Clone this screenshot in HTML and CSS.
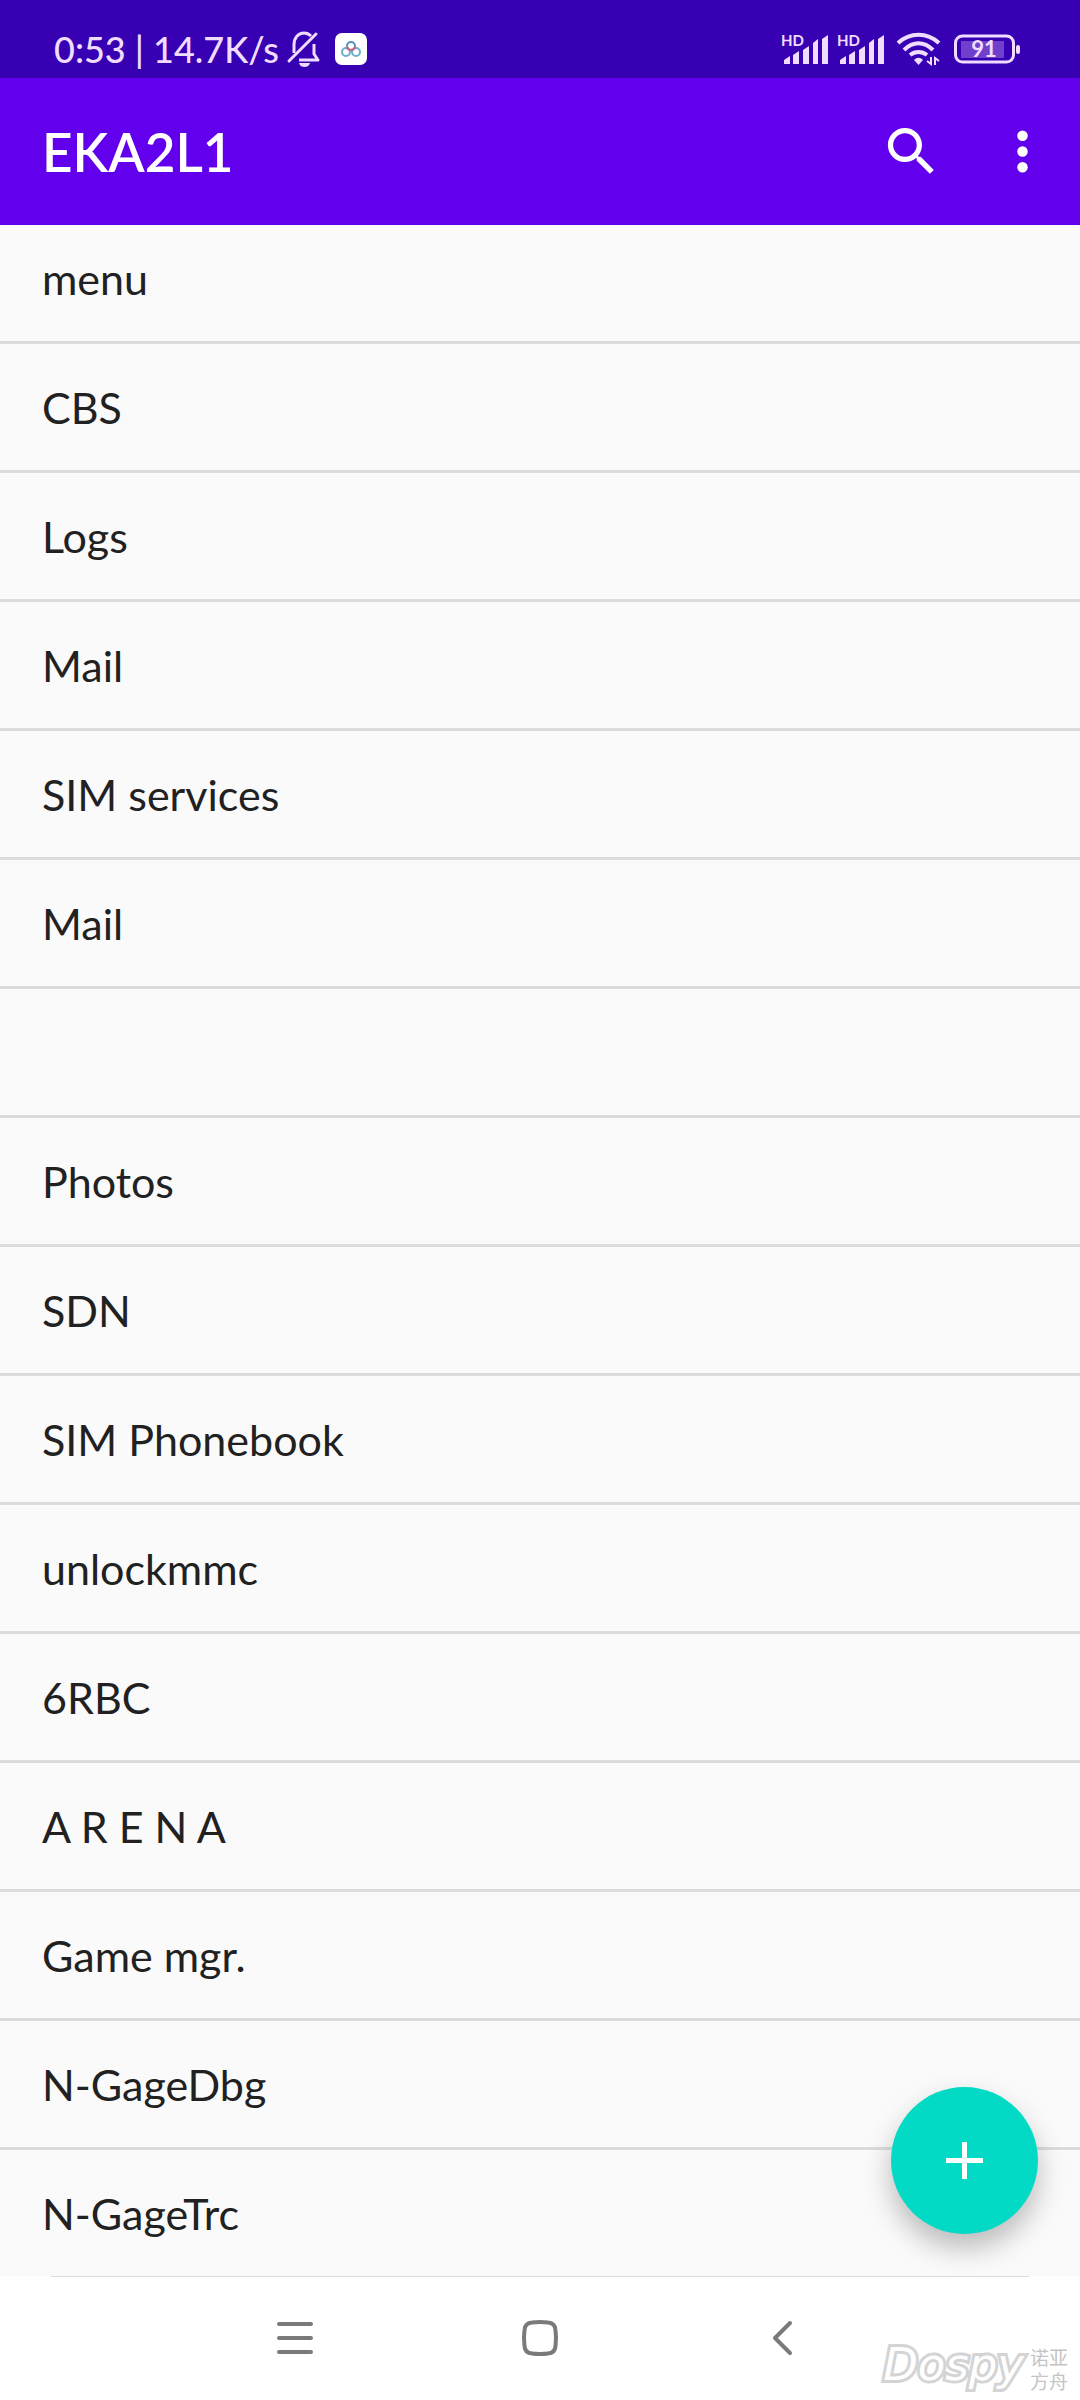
FILE: index.html
```html
<!DOCTYPE html>
<html lang="en">
<head>
    <meta charset="UTF-8">
    <meta name="viewport" content="width=device-width, initial-scale=1.0">
    <title>EKA2L1</title>
    <link rel="stylesheet" href="styles.css">
</head>
<body>
    <div class="status-bar">
        <div class="status-left">
            <span>0:53 | 14.7K/s</span>
            <svg class="bell" width="34" height="38" viewBox="0 0 34 38" fill="none" stroke="#f0dcff" stroke-width="3">
                <path d="M7 23V15C7 8 11 3 17 3c3 0 5 1 7 3M27 14v10l4 6H12" stroke-linejoin="round"/>
                <path d="M2 31L29 4" stroke-linecap="round"/>
                <path d="M12 33h11c-1 3-3 4-5.500 4s-4.500-1-5.500-4z" fill="#f0dcff" stroke="none"/>
            </svg>
            <svg width="32" height="32" viewBox="0 0 32 32" fill="none" stroke-width="2">
                <rect width="32" height="32" rx="7" fill="#fff"/>
                <circle cx="11" cy="19" r="4" stroke="#6ab0cc"/>
                <circle cx="21" cy="19" r="4" stroke="#6ab0cc"/>
                <circle cx="16" cy="13" r="4" stroke="#5590b8"/>
                <path d="M12 14c1 4 7 4 8 0" stroke="#d0667c"/>
            </svg>
        </div>
        <div class="status-right">
            <svg width="48" height="32" viewBox="0 0 48 32" fill="#f0dcff">
                <text class="hd" x="0" y="13">HD</text>
                <path d="M3 27l6-4v8H3zM12 22l6-4v13h-6zM22 17l6-4v18h-6zM32 10l5-4v25h-5zM41 6l6-4v29h-6z"/>
            </svg>
            <svg width="48" height="32" viewBox="0 0 48 32" fill="#f0dcff">
                <text class="hd" x="0" y="13">HD</text>
                <path d="M3 27l6-4v8H3zM12 22l6-4v13h-6zM22 17l6-4v18h-6zM32 10l5-4v25h-5zM41 6l6-4v29h-6z"/>
            </svg>
            <svg class="wifi" width="44" height="34" viewBox="0 0 44 34" fill="none" stroke="#f0dcff" stroke-width="4">
                <path d="M1 11C13 0 30 0 42 11M7 18C16 9 27 9 36 18M13 23c5-4 12-4 17 0"/>
                <path d="M17 28c3-3 6-3 9 0l-4.500 5z" fill="#f0dcff" stroke="none"/>
                <path d="M34 25v7l-4-3M38 33v-7l4 3" stroke-width="2"/>
            </svg>
            <svg class="battery" width="66" height="30" viewBox="0 0 66 30">
                <rect x="1.500" y="2" width="58" height="26" rx="7" fill="none" stroke="#f0dcff" stroke-width="3"/>
                <rect x="7" y="7" width="43" height="17" fill="#7040cc"/>
                <rect x="62" y="11" width="4" height="9" rx="2" fill="#f0dcff"/>
                <text class="level" x="30" y="23" text-anchor="middle" fill="#f0dcff">91</text>
            </svg>
        </div>
    </div>

    <header class="app-bar">
        <h1>EKA2L1</h1>
        <button aria-label="Search">
            <svg width="63" height="63" viewBox="0 0 24 24" fill="#fff">
                <path d="M15.500 14h-.790l-.280-.270C15.410 12.590 16 11.110 16 9.500 16 5.910 13.090 3 9.500 3S3 5.910 3 9.500 5.910 16 9.500 16c1.610 0 3.090-.590 4.230-1.570l.270.280v.790l5 4.990L20.490 19l-4.990-5zm-6 0C7.010 14 5 11.990 5 9.500S7.010 5 9.500 5 14 7.010 14 9.500 11.990 14 9.500 14z"/>
            </svg>
        </button>
        <button aria-label="More options">
            <svg width="63" height="63" viewBox="0 0 24 24" fill="#fff">
                <circle cx="12" cy="6" r="2"/>
                <circle cx="12" cy="12" r="2"/>
                <circle cx="12" cy="18" r="2"/>
            </svg>
        </button>
    </header>

    <main>
        <ul class="app-list">
            <li>menu</li>
            <li>CBS</li>
            <li>Logs</li>
            <li>Mail</li>
            <li>SIM services</li>
            <li>Mail</li>
            <li></li>
            <li>Photos</li>
            <li>SDN</li>
            <li>SIM Phonebook</li>
            <li>unlockmmc</li>
            <li>6RBC</li>
            <li>A R E N A</li>
            <li>Game mgr.</li>
            <li>N-GageDbg</li>
            <li>N-GageTrc</li>
        </ul>
        <button class="fab" aria-label="Add">
            <svg width="37" height="37" viewBox="0 0 37 37" stroke="#fff" stroke-width="5">
                <path d="M18.500 0v37M0 18.500h37"/>
            </svg>
        </button>
    </main>

    <nav class="nav-bar">
        <button aria-label="Recent apps">
            <svg width="44" height="44" viewBox="0 0 44 44" stroke="#7a7a7a" stroke-width="4" stroke-linecap="round">
                <path d="M6 8h32M6 22h32M6 36h32"/>
            </svg>
        </button>
        <button aria-label="Home">
            <svg width="44" height="44" viewBox="0 0 44 44" fill="none" stroke="#7a7a7a" stroke-width="4">
                <path d="M14 6.500Q22 5.500 30 6.500Q37 7 37.500 14Q38.500 22 37.500 30Q37 37 30 37.500Q22 38.500 14 37.500Q7 37 6.500 30Q5.500 22 6.500 14Q7 7 14 6.500z"/>
            </svg>
        </button>
        <button aria-label="Back">
            <svg width="44" height="44" viewBox="0 0 44 44" fill="none" stroke="#7a7a7a" stroke-width="4" stroke-linecap="round" stroke-linejoin="round">
                <path d="M27 7L12 22L27 37"/>
            </svg>
        </button>
        <div class="watermark">
            <span class="brand">Dospy</span>
            <span class="brand-cn" lang="zh">诺亚<br>方舟</span>
        </div>
    </nav>
</body>
</html>
```

FILE: styles.css
```css
* {
    box-sizing: border-box;
}
body {
    margin: 0;
    min-height: 100vh;
    display: flex;
    flex-direction: column;
    background-color: #fafafa;
    color: #212121;
    font-family: Lato, "Noto Sans", sans-serif;
}
svg {
    display: block;
    flex: none;
    overflow: visible;
}
button {
    padding: 0;
    border: none;
    background: none;
    cursor: pointer;
}
.status-bar {
    display: flex;
    justify-content: space-between;
    height: 78px;
    padding: 20px 60px 0 54px;
    background-color: #3700b3;
    color: #f0dcff;
}
.status-left,
.status-right {
    display: flex;
    align-items: center;
    height: 58px;
}
.status-left {
    font-size: 36px;
    font-weight: 500;
    white-space: nowrap;
}
.bell {
    margin: 0 14px 0 8px;
}
.status-right {
    gap: 8px;
}
.wifi {
    margin-left: 4px;
}
.battery {
    margin-left: 5px;
}
.hd {
    font-size: 15px;
    font-weight: bold;
}
.level {
    font-size: 22px;
    font-weight: bold;
}
.app-bar {
    display: flex;
    align-items: center;
    gap: 48px;
    height: 147px;
    padding: 0 26px 0 42px;
    background-color: #6200ee;
    color: #ffffff;
}
.app-bar h1 {
    flex: 1;
    margin: 0;
    font-size: 53px;
    font-weight: 600;
}
main {
    position: relative;
    flex: 1;
}
.app-list {
    margin: 0;
    padding: 0;
    list-style: none;
    font-size: 43px;
}
.app-list li {
    display: flex;
    align-items: center;
    height: 129px;
    padding: 0 42px;
    border-bottom: 3px solid #dcdcdc;
}
/* first row is partly scrolled under the app bar */
.app-list li:first-child {
    height: 119px;
    padding-bottom: 10px;
}
.app-list li:last-child {
    height: 126px;
    border-bottom: none;
}
.fab {
    position: absolute;
    right: 42px;
    bottom: 42px;
    display: flex;
    justify-content: center;
    align-items: center;
    width: 147px;
    height: 147px;
    border-radius: 50%;
    background-color: #03dac5;
    box-shadow: 0 14px 28px rgba(0, 0, 0, 0.26);
}
.nav-bar {
    position: relative;
    display: grid;
    grid-template-columns: repeat(3, 1fr);
    align-items: center;
    justify-items: center;
    height: 124px;
    padding: 0 16%;
    background-color: #ffffff;
}
.nav-bar::before {
    content: "";
    position: absolute;
    top: 0;
    left: 51px;
    right: 51px;
    height: 1px;
    background-color: #dcdcdc;
}
.watermark {
    position: absolute;
    right: 12px;
    bottom: 7px;
    display: flex;
    align-items: flex-start;
    gap: 6px;
    color: #ffffff;
}
.brand {
    font-family: "DejaVu Sans", sans-serif;
    font-size: 45px;
    font-style: italic;
    line-height: 40px;
    -webkit-text-stroke: 6px #d4d4d4;
    paint-order: stroke fill;
}
.brand-cn {
    color: #c4c4c4;
    font-family: "Noto Sans CJK SC", sans-serif;
    font-size: 19px;
    line-height: 24px;
}
```
